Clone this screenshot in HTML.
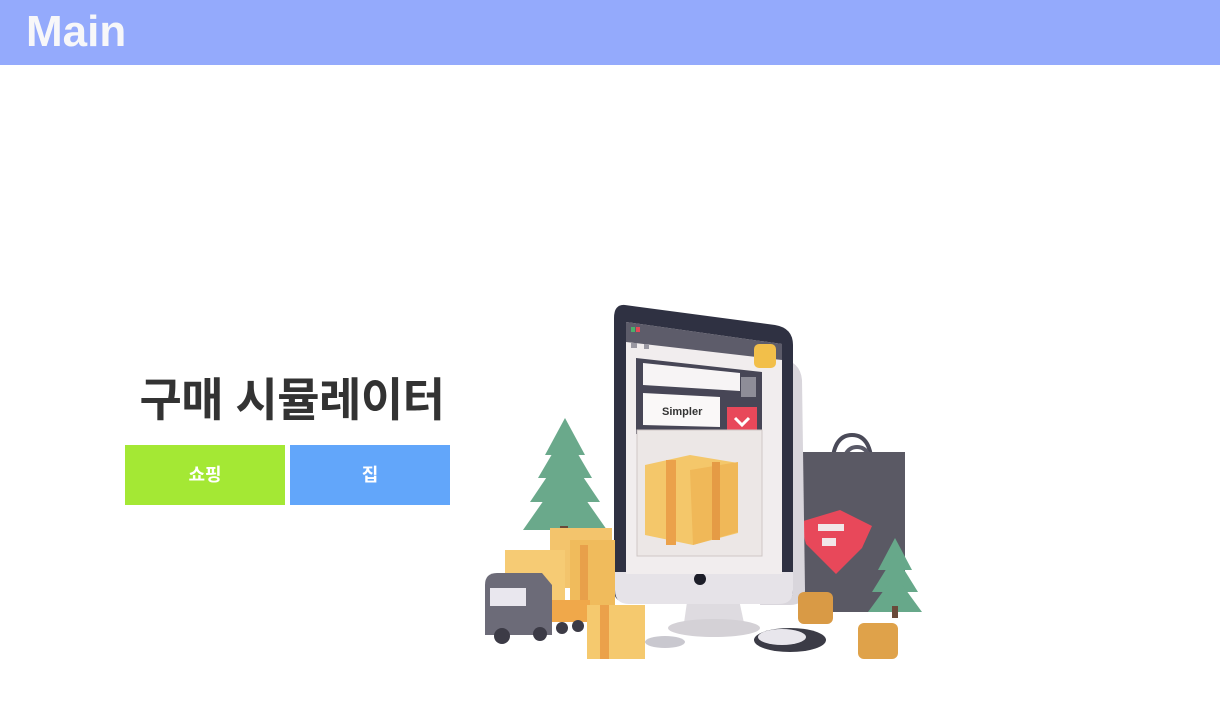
<!DOCTYPE html>
<html><head><meta charset="utf-8"><style>
*{margin:0;padding:0;box-sizing:border-box}
body{width:1220px;height:725px;background:#fff;position:relative;overflow:hidden;font-family:"Liberation Sans","Noto Sans CJK KR","NanumGothic",sans-serif}
.hdr{position:absolute;left:0;top:0;width:1220px;height:65px;background:#94aafc}
.hdr h1{position:absolute;left:26px;top:8px;font-size:44px;font-weight:bold;color:#f7f7f9;line-height:48px}
.title{position:absolute;left:120px;width:344px;top:372px;text-align:center;font-size:46px;font-weight:bold;color:#333;line-height:56px;white-space:nowrap;letter-spacing:-0.5px}
.btn{position:absolute;top:445px;width:160px;height:60px;color:#fff;font-weight:bold;font-size:18px;text-align:center;line-height:60px}
</style></head><body>
<div class="hdr"><h1>Main</h1></div>
<div class="title">구매 시뮬레이터</div>
<div class="btn" style="left:125px;background:#a4e834">쇼핑</div>
<div class="btn" style="left:290px;background:#62a6fa">집</div>
<svg style="position:absolute;left:0;top:0" width="1220" height="725" viewBox="0 0 1220 725">
<!-- bag -->
<path d="M832 470 q0-35 20-35 q20 0 20 35" fill="none" stroke="#4a4a58" stroke-width="4"/>
<path d="M842 475 q0-28 15-28 q15 0 15 28" fill="none" stroke="#5a5a68" stroke-width="4"/>
<rect x="803" y="452" width="102" height="160" fill="#5a5964"/>
<path d="M800 522 l40-12 l32 16 l-10 22 l-26 26 l-30-30z" fill="#e8485a"/>
<rect x="818" y="524" width="26" height="7" fill="#f1e6e8"/><rect x="822" y="538" width="14" height="8" fill="#f1e6e8"/>
<!-- right tree -->
<polygon points="895,538 878,570 912,570" fill="#67a88a"/>
<polygon points="895,555 872,592 918,592" fill="#67a88a"/>
<polygon points="895,575 868,612 922,612" fill="#67a88a"/>
<rect x="892" y="606" width="6" height="12" fill="#6a4a3a"/>
<!-- monitor -->
<path d="M780 360 q20 0 22 20 l3 210 q0 15-15 15 l-30 0z" fill="#d9d6dc"/>
<path d="M688 595 h50 l6 28 h-60z" fill="#dedbe0"/>
<ellipse cx="714" cy="628" rx="46" ry="9" fill="#d4d1d6"/>
<path d="M625 305 l150 20 q18 3 18 20 l0 245 q0 12-12 12 l-155 0 q-12 0-12-12 l0-272 q0-14 11-13z" fill="#2f3142"/>
<path d="M615 572 h178 v18 q0 14-14 14 h-150 q-14 0-14-14z" fill="#e6e3e8"/>
<circle cx="700" cy="579" r="6" fill="#1c1d28"/>
<path d="M626 322 l156 22 l0 230 l-156 0z" fill="#f1edee"/>
<path d="M626 322 l156 22 l0 16 l-156 -18z" fill="#5d5c6a"/>
<rect x="631" y="327" width="4" height="5" fill="#4caf6a"/><rect x="636" y="327" width="4" height="5" fill="#e54a57"/>
<rect x="631" y="343" width="6" height="5" fill="#9a98a2"/><rect x="644" y="344" width="5" height="5" fill="#9a98a2"/>
<rect x="754" y="344" width="22" height="24" rx="5" fill="#f2bf4a"/>
<path d="M636 358 l126 14 l0 68 l-126 -6z" fill="#474656"/>
<path d="M643 363 l97 10 l0 18 l-97 -6z" fill="#f7f4f5"/>
<rect x="741" y="377" width="15" height="20" fill="#8e8d98"/>
<path d="M643 393 l77 4 l0 30 l-77 -2z" fill="#faf8f8"/>
<text x="662" y="415" font-size="11" font-weight="bold" fill="#333" font-family="Liberation Sans,sans-serif">Simpler</text>
<rect x="727" y="407" width="30" height="30" fill="#e8485a"/>
<path d="M735 418 l7 7 l7-7" fill="none" stroke="#fff" stroke-width="3"/>
<rect x="637" y="430" width="125" height="126" fill="#ece7e6" stroke="#cfc7c5"/>
<path d="M645 465 l45-10 l48 8 l0 70 l-45 12 l-48-10z" fill="#f4c76a"/>
<path d="M690 470 l48-8 l0 70 l-45 13z" fill="#f0b858"/>
<rect x="666" y="460" width="10" height="85" fill="#eba14a"/>
<rect x="712" y="462" width="8" height="78" fill="#e59b45"/>
<!-- left tree -->
<polygon points="565,418 545,455 585,455" fill="#6aa98b"/>
<polygon points="565,432 538,478 592,478" fill="#6aa98b"/>
<polygon points="565,450 530,502 600,502" fill="#6aa98b"/>
<polygon points="565,470 523,530 607,530" fill="#6aa98b"/>
<rect x="560" y="526" width="8" height="14" fill="#6a4a3a"/>
<!-- boxes -->
<rect x="550" y="528" width="62" height="60" fill="#f3c46c"/>
<rect x="505" y="550" width="60" height="55" fill="#f6cb74"/>
<rect x="570" y="540" width="45" height="70" fill="#f0bb5c"/>
<rect x="580" y="545" width="8" height="65" fill="#e8a04a"/>
<!-- truck -->
<rect x="540" y="600" width="50" height="22" fill="#f0a84a"/>
<path d="M485 585 q0-12 12-12 h45 l10 12 v50 h-67z" fill="#6c6b78"/>
<rect x="490" y="588" width="36" height="18" fill="#e9e7ee"/>
<circle cx="502" cy="636" r="8" fill="#3c3b46"/><circle cx="540" cy="634" r="7" fill="#3c3b46"/>
<circle cx="562" cy="628" r="6" fill="#3c3b46"/><circle cx="578" cy="626" r="6" fill="#3c3b46"/>
<rect x="587" y="605" width="58" height="54" fill="#f5c96e"/>
<rect x="600" y="605" width="9" height="54" fill="#eba14a"/>
<ellipse cx="665" cy="642" rx="20" ry="6" fill="#c9c8cf"/>
<!-- coins -->
<rect x="798" y="592" width="35" height="32" rx="6" fill="#d99a45"/>
<rect x="858" y="623" width="40" height="36" rx="6" fill="#dfa24a"/>
<!-- mouse -->
<ellipse cx="790" cy="640" rx="36" ry="12" fill="#3b3b46"/>
<ellipse cx="782" cy="637" rx="24" ry="8" fill="#e8e6ec"/>
</svg>
</body></html>
